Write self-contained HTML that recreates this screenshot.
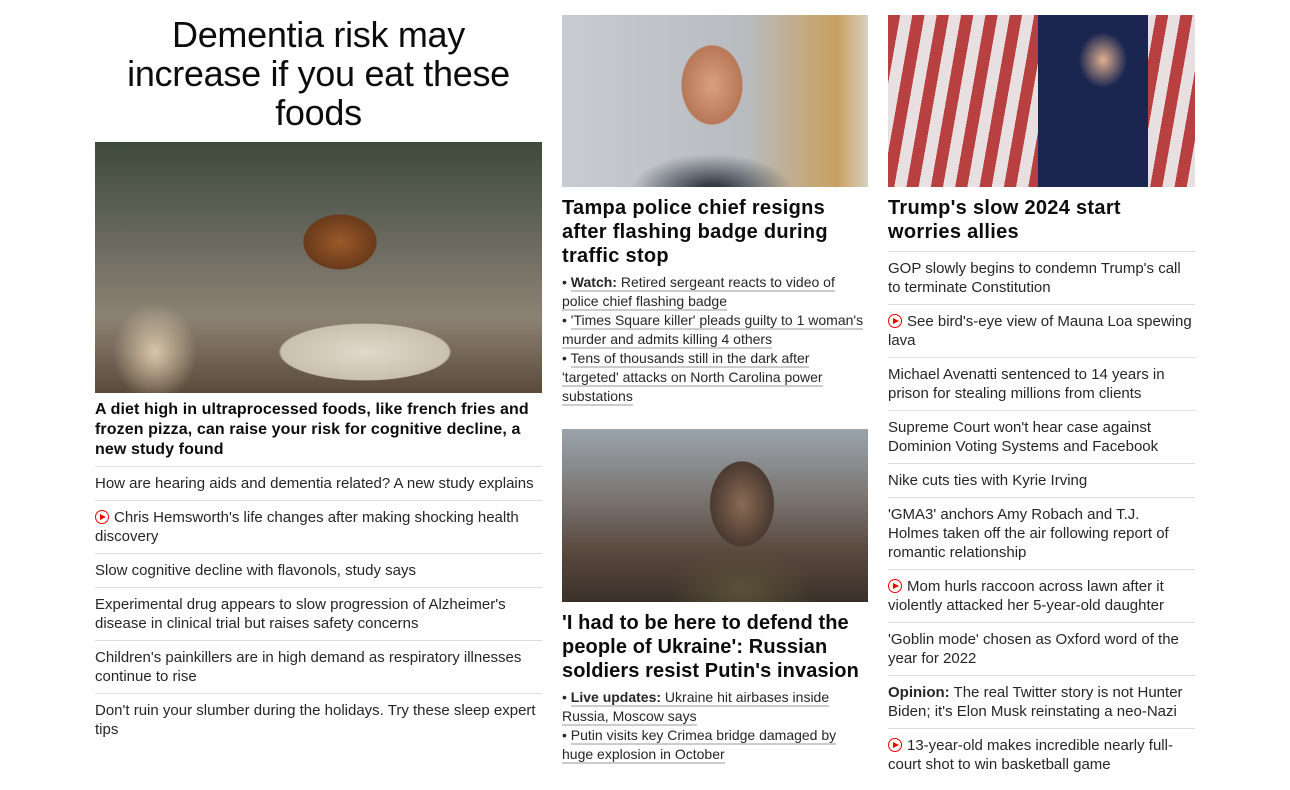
<!DOCTYPE html>
<html><head><meta charset="utf-8"><style>
*{margin:0;padding:0;box-sizing:border-box}
body{width:1290px;height:790px;background:#fff;font-family:"Liberation Sans",Arial,sans-serif;color:#0c0c0c;position:relative;overflow:hidden}
.col{position:absolute;top:15px}
h1{font-size:36px;font-weight:400;line-height:39px;text-align:center;letter-spacing:-0.3px;margin-bottom:10px;margin-top:0;color:#0c0c0c}
.img{display:block}
h2{font-size:20px;font-weight:700;line-height:24px;letter-spacing:0.3px;color:#0c0c0c;white-space:nowrap}
h3{font-size:16px;font-weight:700;line-height:20px;margin:7px 0 6px;letter-spacing:0.1px;white-space:nowrap}
ul{list-style:none}
ul.l li{border-top:1px solid #ddd;font-size:15px;line-height:19px;padding:7px 0 7px;color:#262626}
.n li{white-space:nowrap}
.b{font-size:14px;line-height:19px;color:#262626}
.b span{border-bottom:2px solid #ccc}
.p{display:inline-block;width:14px;height:14px;border:1.5px solid #e00;border-radius:50%;position:relative;vertical-align:-2px;margin-right:5px}
.p:after{content:"";position:absolute;left:4px;top:2.5px;border-left:6px solid #e00;border-top:3.5px solid transparent;border-bottom:3.5px solid transparent}
</style></head><body>
<div class="col" style="left:95px;width:447px">
<h1>Dementia risk may<br>increase if you eat these<br>foods</h1>
<div class="img" style="height:251px;background:radial-gradient(ellipse 60px 45px at 245px 100px,#9a5a2a,#6a3a1a 60%,transparent 62%),radial-gradient(ellipse 120px 40px at 270px 210px,#e0d8c8,#c9c0b0 70%,transparent 72%),radial-gradient(ellipse 60px 70px at 60px 210px,#d8c6a8,transparent 70%),linear-gradient(180deg,#3d4a3a 0%,#6b6a60 40%,#8c8273 70%,#5a4a3a 100%)"></div>
<h3>A diet high in ultraprocessed foods, like french fries and<br>frozen pizza, can raise your risk for cognitive decline, a<br>new study found</h3>
<ul class="l n">
<li>How are hearing aids and dementia related? A new study explains</li>
<li><i class="p"></i>Chris Hemsworth's life changes after making shocking health<br>discovery</li>
<li>Slow cognitive decline with flavonols, study says</li>
<li>Experimental drug appears to slow progression of Alzheimer's<br>disease in clinical trial but raises safety concerns</li>
<li>Children's painkillers are in high demand as respiratory illnesses<br>continue to rise</li>
<li>Don't ruin your slumber during the holidays. Try these sleep expert<br>tips</li>
</ul></div>
<div class="col" style="left:562px;width:306px">
<div class="img" style="height:172px;background:radial-gradient(ellipse 50px 65px at 150px 70px,#d9a080,#b87858 60%,transparent 62%),radial-gradient(ellipse 90px 40px at 150px 175px,#1e2630,transparent 90%),linear-gradient(90deg,#c8ccd0,#b8bcc0 60%,#c9a060 90%,#d8d0c0)"></div>
<h2 style="margin-top:9px">Tampa police chief resigns<br>after flashing badge during<br>traffic stop</h2>
<div class="b" style="margin-top:5px">• <span><b>Watch:</b> Retired sergeant reacts to video of police chief flashing badge</span><br>• <span>'Times Square killer' pleads guilty to 1 woman's murder and admits killing 4 others</span><br>• <span>Tens of thousands still in the dark after 'targeted' attacks on North Carolina power substations</span></div>
<div class="img" style="height:173px;margin-top:23px;background:radial-gradient(ellipse 45px 60px at 180px 75px,#8a6a55,#4a3a30 70%,transparent 72%),radial-gradient(ellipse 80px 50px at 180px 160px,#5a5038,transparent 90%),linear-gradient(180deg,#9aa4ac 0%,#7a7470 40%,#5a4a40 70%,#3a3028 100%)"></div>
<h2 style="margin-top:9px;letter-spacing:0.1px">'I had to be here to defend the<br>people of Ukraine': Russian<br>soldiers resist Putin's invasion</h2>
<div class="b" style="margin-top:5px">• <span><b>Live updates:</b> Ukraine hit airbases inside Russia, Moscow says</span><br>• <span>Putin visits key Crimea bridge damaged by huge explosion in October</span></div>
</div>
<div class="col" style="left:888px;width:307px">
<div class="img" style="height:172px;background:radial-gradient(ellipse 35px 40px at 215px 45px,#e0b090,transparent 70%),linear-gradient(90deg,transparent 150px,#1a2550 150px,#1a2550 260px,transparent 260px),repeating-linear-gradient(100deg,#b84040 0 12px,#e8e0e0 12px 24px)"></div>
<h2 style="margin-top:9px">Trump's slow 2024 start<br>worries allies</h2>
<ul class="l n" style="margin-top:7px">
<li>GOP slowly begins to condemn Trump's call<br>to terminate Constitution</li>
<li><i class="p"></i>See bird's-eye view of Mauna Loa spewing<br>lava</li>
<li>Michael Avenatti sentenced to 14 years in<br>prison for stealing millions from clients</li>
<li>Supreme Court won't hear case against<br>Dominion Voting Systems and Facebook</li>
<li>Nike cuts ties with Kyrie Irving</li>
<li>'GMA3' anchors Amy Robach and T.J.<br>Holmes taken off the air following report of<br>romantic relationship</li>
<li><i class="p"></i>Mom hurls raccoon across lawn after it<br>violently attacked her 5-year-old daughter</li>
<li>'Goblin mode' chosen as Oxford word of the<br>year for 2022</li>
<li><b>Opinion:</b> The real Twitter story is not Hunter<br>Biden; it's Elon Musk reinstating a neo-Nazi</li>
<li><i class="p"></i>13-year-old makes incredible nearly full-<br>court shot to win basketball game</li>
</ul></div>
</body></html>
